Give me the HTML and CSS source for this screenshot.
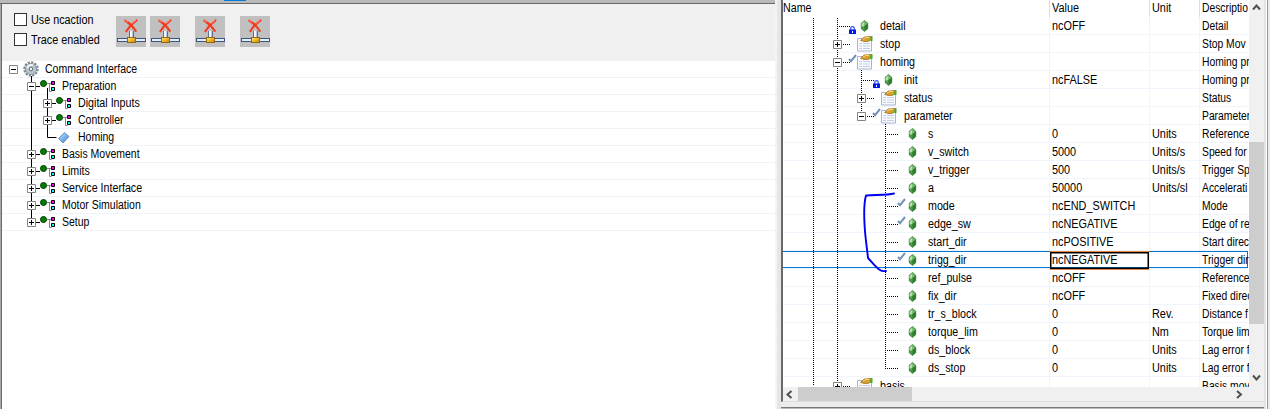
FILE: index.html
```html
<!DOCTYPE html>
<html lang="en">
<head>
<meta charset="utf-8">
<title>Command Interface</title>
<link rel="stylesheet" href="styles.css">
</head>
<body>
<svg class="defs" width="0" height="0">
  <defs>
    <linearGradient id="gold" x1="0" y1="0" x2="1" y2="1"><stop offset="0" stop-color="#fff0a0"/><stop offset=".5" stop-color="#f0b820"/><stop offset="1" stop-color="#c07c10"/></linearGradient>
    <linearGradient id="blue" x1="0" y1="0" x2="1" y2="1"><stop offset="0" stop-color="#c4e2ff"/><stop offset="1" stop-color="#3d84d4"/></linearGradient>
    <symbol id="disconnect" viewBox="0 0 30 31">
      <rect x="13" y="15" width="5" height="7" fill="#5a7094"/><rect x="14" y="15" width="2" height="7" fill="#f4f8ff"/><rect x="16" y="15" width="1" height="7" fill="#b4c4dc"/>
      <rect x="1" y="22" width="29" height="4" fill="#3c5480"/><rect x="2" y="23" width="27" height="2" fill="#e4eefa"/>
      <rect x="11.5" y="21.5" width="8" height="5" fill="url(#gold)" stroke="#946814"/>
      <path d="M9.2 4.5Q15 8 19.8 14.8M20.5 4.3Q14 9 10.3 15.2" fill="none" stroke="#f33a1e" stroke-width="2.1" stroke-linecap="round"/>
      <path d="M9 4l3 2M20 4l-4 3.5" stroke="#ff9a80" fill="none"/>
    </symbol>
    <symbol id="plus" viewBox="0 0 9 9"><path d="M.5.5h8v8h-8z" fill="#fff" stroke="#848484"/><path d="M2 4.5h5M4.5 2v5" stroke="#000"/></symbol>
    <symbol id="minus" viewBox="0 0 9 9"><path d="M.5.5h8v8h-8z" fill="#fff" stroke="#848484"/><path d="M2 4.5h5" stroke="#000"/></symbol>
    <symbol id="node" viewBox="0 0 20 17">
      <path d="M0 8.5h4" stroke="#000"/>
      <path d="M11 5.5h4M13.5 5v8.5h2" fill="none" stroke="#848484"/>
      <circle cx="7.5" cy="5.5" r="3" fill="#008000" stroke="#053c05"/>
      <path d="M15.5 3.5h3v3h-3z" fill="#f0f" stroke="#000"/><path d="M15.5 9.5h3v3h-3z" fill="#0ff" stroke="#000"/>
    </symbol>
    <symbol id="gear" viewBox="0 0 16 16">
      <circle cx="8" cy="8" r="6.6" fill="none" stroke="#7b8791" stroke-width="2.2" stroke-dasharray="2.2 1.25"/>
      <circle cx="8" cy="8" r="5.5" fill="#bcc6ce" stroke="#87939d"/>
      <path d="M4.2 7.4A4 4 0 0 1 10 4.3" fill="none" stroke="#f4f8fa" stroke-width="1.8"/>
      <circle cx="8" cy="8" r="1.8" fill="#eef2f4" stroke="#616d77"/>
    </symbol>
    <symbol id="gem" viewBox="0 0 8 12">
      <path d="M4 .5L7.5 3.5v5L4 11.5.5 8.5v-5z" fill="#4aa046" stroke="#2f702f" stroke-width=".7"/>
      <path d="M4 1L1 3.8v3L4 6z" fill="#b4e0ae"/><path d="M4 1l3 2.8L4 6z" fill="#74b870"/><path d="M4 6l3.2-2.2v4.4L4 11z" fill="#2f7a30"/>
    </symbol>
    <symbol id="sheet" viewBox="0 0 16 16">
      <path d="M.5 2.5h14v12.5H.5z" fill="#f8faff" stroke="#a9b5cc"/>
      <path d="M2 7.5h3M6 7.5h7M2 10h3M6 10h7M2 12.5h3M6 12.5h7" stroke="#c3cee2"/>
      <path d="M3.5 4.5L7 1l7-.5V4l-3 1.5H7L5.5 5z" fill="#d69e2c" stroke="#9c6c18" stroke-width=".7"/>
      <path d="M6 3l3-1.5h3" stroke="#f7d77d" fill="none"/><path d="M14 0h1.5v5H13z" fill="#3cb42c"/>
    </symbol>
    <symbol id="lock" viewBox="0 0 7 8"><path d="M1.8 4V2q0-1.3 1.7-1.3T5.2 2v2" fill="none" stroke="#2c4cf0" stroke-width="1.2"/><path d="M0 3.5h7V8H0z" fill="#0018e8"/><path d="M3 5h1v2H3z" fill="#fff"/></symbol>
    <symbol id="check" viewBox="0 0 9 9"><path d="M1 5l2 2.2L8 1" fill="none" stroke="#7491b8" stroke-width="2"/></symbol>
    <symbol id="open-group" viewBox="0 0 48 18"><use href="#minus" x="1" y="5" width="9" height="9"/><path d="M11 9.5h8" class="dots"/><use href="#sheet" x="25" y="1" width="16" height="16"/></symbol>
    <symbol id="closed-group" viewBox="0 0 48 18"><use href="#plus" x="1" y="5" width="9" height="9"/><path d="M11 9.5h8" class="dots"/><use href="#sheet" x="25" y="1" width="16" height="16"/></symbol>
    <symbol id="leaf" viewBox="0 0 48 18"><path d="M5 9.5h13" class="dots"/><use href="#gem" x="28.5" y="3" width="8" height="12"/></symbol>
  </defs>
</svg>
<div class="app">
  <section class="commands">
    <div class="topstrip"><i></i></div>
    <div class="toolbar">
      <div class="checks">
        <label><b class="box"></b><span class="t wide">Use ncaction</span></label>
        <label><b class="box"></b><span class="t wide">Trace enabled</span></label>
      </div>
      <div class="buttons">
        <svg><use href="#disconnect"/></svg><svg><use href="#disconnect"/></svg><svg class="apart"><use href="#disconnect"/></svg><svg class="apart"><use href="#disconnect"/></svg>
      </div>
    </div>
    <div class="ctree">
      <svg class="lines" width="80" height="170"><path d="M31.5 15v146M47.5 27v49.5h9" fill="none" stroke="#000"/></svg>
      <div class="crow d0"><svg width="36" height="17"><use href="#minus" x="0" y="4" width="9" height="9"/><use href="#gear" x="14" y="0" width="16" height="16"/></svg><span class="t tight">Command Interface</span></div>
      <div class="crow d1"><svg width="35" height="17"><use href="#minus" x="0" y="4" width="9" height="9"/><use href="#node" x="9" width="20" height="17"/></svg><span class="t tight">Preparation</span></div>
      <div class="crow d2"><svg width="35" height="17"><use href="#plus" x="0" y="4" width="9" height="9"/><use href="#node" x="9" width="20" height="17"/></svg><span class="t">Digital Inputs</span></div>
      <div class="crow d2"><svg width="35" height="17"><use href="#plus" x="0" y="4" width="9" height="9"/><use href="#node" x="9" width="20" height="17"/></svg><span class="t tight">Controller</span></div>
      <div class="crow d2"><svg width="35" height="17"><path d="M15.5 9.5l6-6 4.5 4-6 6.5z" fill="url(#blue)" stroke="#4a80bd" stroke-width=".8"/></svg><span class="t tight">Homing</span></div>
      <div class="crow d1"><svg width="35" height="17"><use href="#plus" x="0" y="4" width="9" height="9"/><use href="#node" x="9" width="20" height="17"/></svg><span class="t tight">Basis Movement</span></div>
      <div class="crow d1"><svg width="35" height="17"><use href="#plus" x="0" y="4" width="9" height="9"/><use href="#node" x="9" width="20" height="17"/></svg><span class="t">Limits</span></div>
      <div class="crow d1"><svg width="35" height="17"><use href="#plus" x="0" y="4" width="9" height="9"/><use href="#node" x="9" width="20" height="17"/></svg><span class="t">Service Interface</span></div>
      <div class="crow d1"><svg width="35" height="17"><use href="#plus" x="0" y="4" width="9" height="9"/><use href="#node" x="9" width="20" height="17"/></svg><span class="t tight">Motor Simulation</span></div>
      <div class="crow d1"><svg width="35" height="17"><use href="#plus" x="0" y="4" width="9" height="9"/><use href="#node" x="9" width="20" height="17"/></svg><span class="t tight">Setup</span></div>
    </div>
  </section>
  <div class="splitter"></div>
  <section class="params">
    <div class="view">
      <div class="table">
        <div class="prow head"><div><span class="t">Name</span></div><div><span class="t">Value</span></div><div><span class="t">Unit</span></div><div><span class="t">Descriptio</span></div></div>
        <svg class="lines" width="120" height="387"><path d="M30.5 18v368M54.5 18v368M78.5 70v46M102.5 124v244" class="dots"/></svg>
        <div class="prow p1"><div><svg><use href="#leaf"/><use href="#lock" x="17" y="9" width="7" height="8"/></svg><span class="t">detail</span></div><div><span class="t">ncOFF</span></div><div></div><div><span class="t">Detail</span></div></div>
        <div class="prow p1"><div><svg><use href="#closed-group"/></svg><span class="t">stop</span></div><div></div><div></div><div><span class="t">Stop Mov</span></div></div>
        <div class="prow p1"><div><svg><use href="#open-group"/><use href="#check" x="16" y="1" width="9" height="9"/></svg><span class="t">homing</span></div><div></div><div></div><div><span class="t">Homing pr</span></div></div>
        <div class="prow p2"><div><svg><use href="#leaf"/><use href="#lock" x="17" y="9" width="7" height="8"/></svg><span class="t">init</span></div><div><span class="t">ncFALSE</span></div><div></div><div><span class="t">Homing pr</span></div></div>
        <div class="prow p2"><div><svg><use href="#closed-group"/></svg><span class="t">status</span></div><div></div><div></div><div><span class="t">Status</span></div></div>
        <div class="prow p2"><div><svg><use href="#open-group"/><use href="#check" x="16" y="1" width="9" height="9"/></svg><span class="t">parameter</span></div><div></div><div></div><div><span class="t">Parameter</span></div></div>
        <div class="prow p3"><div><svg><use href="#leaf"/></svg><span class="t">s</span></div><div><span class="t">0</span></div><div><span class="t">Units</span></div><div><span class="t">Reference</span></div></div>
        <div class="prow p3"><div><svg><use href="#leaf"/></svg><span class="t">v_switch</span></div><div><span class="t">5000</span></div><div><span class="t">Units/s</span></div><div><span class="t">Speed for</span></div></div>
        <div class="prow p3"><div><svg><use href="#leaf"/></svg><span class="t">v_trigger</span></div><div><span class="t">500</span></div><div><span class="t">Units/s</span></div><div><span class="t">Trigger Sp</span></div></div>
        <div class="prow p3"><div><svg><use href="#leaf"/></svg><span class="t">a</span></div><div><span class="t">50000</span></div><div><span class="t">Units/sl</span></div><div><span class="t">Accelerati</span></div></div>
        <div class="prow p3"><div><svg><use href="#leaf"/><use href="#check" x="17" y="1" width="9" height="9"/></svg><span class="t">mode</span></div><div><span class="t">ncEND_SWITCH</span></div><div></div><div><span class="t">Mode</span></div></div>
        <div class="prow p3"><div><svg><use href="#leaf"/><use href="#check" x="17" y="1" width="9" height="9"/></svg><span class="t">edge_sw</span></div><div><span class="t">ncNEGATIVE</span></div><div></div><div><span class="t">Edge of re</span></div></div>
        <div class="prow p3"><div><svg><use href="#leaf"/></svg><span class="t">start_dir</span></div><div><span class="t">ncPOSITIVE</span></div><div></div><div><span class="t">Start direc</span></div></div>
        <div class="prow p3 selected"><div><svg><use href="#leaf"/><use href="#check" x="17" y="1" width="9" height="9"/></svg><span class="t">trigg_dir</span></div><div class="focus"><span class="t">ncNEGATIVE</span></div><div></div><div><span class="t">Trigger dir</span></div></div>
        <div class="prow p3"><div><svg><use href="#leaf"/></svg><span class="t">ref_pulse</span></div><div><span class="t">ncOFF</span></div><div></div><div><span class="t">Reference</span></div></div>
        <div class="prow p3"><div><svg><use href="#leaf"/></svg><span class="t">fix_dir</span></div><div><span class="t">ncOFF</span></div><div></div><div><span class="t">Fixed direc</span></div></div>
        <div class="prow p3"><div><svg><use href="#leaf"/></svg><span class="t">tr_s_block</span></div><div><span class="t">0</span></div><div><span class="t">Rev.</span></div><div><span class="t">Distance f</span></div></div>
        <div class="prow p3"><div><svg><use href="#leaf"/></svg><span class="t">torque_lim</span></div><div><span class="t">0</span></div><div><span class="t">Nm</span></div><div><span class="t">Torque lim</span></div></div>
        <div class="prow p3"><div><svg><use href="#leaf"/></svg><span class="t">ds_block</span></div><div><span class="t">0</span></div><div><span class="t">Units</span></div><div><span class="t">Lag error f</span></div></div>
        <div class="prow p3"><div><svg><use href="#leaf"/></svg><span class="t">ds_stop</span></div><div><span class="t">0</span></div><div><span class="t">Units</span></div><div><span class="t">Lag error f</span></div></div>
        <div class="prow p1"><div><svg><use href="#closed-group"/></svg><span class="t">basis</span></div><div></div><div></div><div><span class="t">Basis mov</span></div></div>
        <svg class="marker" width="36" height="84"><path d="M32 3.5C25 5.5 11 4.5 4 5.5C1.5 14 2 24 2.5 34C3 46 5 58 6 68C10 72 13 77 18 80Q20 81.5 24 81" fill="none" stroke="#0000f0" stroke-width="1.9" stroke-linecap="round"/></svg>
      </div>
      <div class="vscroll"><svg width="15" height="14"><path d="M4 9.5L7.5 5.5 11 9.5" class="arrow"/></svg><i></i><svg width="15" height="16"><path d="M4 5.5L7.5 9.5 11 5.5" class="arrow"/></svg></div>
    </div>
    <div class="hscroll"><svg width="15" height="14"><path d="M8.5 4L4.5 7.5 8.5 11" class="arrow"/></svg><i></i><svg width="30" height="14"><path d="M5 4L9 7.5 5 11" class="arrow"/></svg></div>
    <div class="under"></div>
  </section>
  <div class="edge"></div>
</div>
</body>
</html>
```
FILE: styles.css
```css
* { box-sizing: border-box; }
body { margin: 0; background: #ececec; font: 12px/16px "Liberation Sans", Arial, sans-serif; color: #000; overflow: hidden; }
.defs { position: absolute; }
.app { display: flex; width: 1270px; height: 409px; overflow: hidden; }
.t { display: inline-block; white-space: nowrap; transform: scaleX(.89); transform-origin: 0 50%; }
.t.wide { transform: scaleX(.9); }
.t.tight { transform: scaleX(.875); }
.dots { fill: none; stroke: #000; stroke-width: 1; stroke-dasharray: 1 1; }
.arrow { fill: none; stroke: #505050; stroke-width: 2; }

.commands { width: 775px; display: flex; flex-direction: column; background: #fff; border-left: 1px solid #a8a8a8; }
.topstrip { height: 4px; margin-left: -1px; background: #b9b9b9; border-bottom: 1px solid #696969; flex: none; }
.topstrip i { display: block; width: 22px; height: 1px; margin-left: 224px; background: #0078d7; }
.toolbar { height: 57px; flex: none; display: flex; background: #f0f0f0; border-left: 1px solid #696969; padding: 9px 0 0 12px; }
.checks { width: 102px; display: flex; flex-direction: column; gap: 4px; }
.checks label { display: flex; height: 16px; gap: 4px; }
.checks .t { margin-top: -1px; }
.box { width: 13px; height: 13px; border: 1px solid #333; background: #fff; flex: none; }
.buttons { display: flex; gap: 4px; padding-top: 3px; }
.buttons svg { width: 30px; height: 31px; background: #c0c0c0; }
.buttons .apart { margin-left: 11px; }

.ctree { flex: 1; position: relative; border-left: 1px solid #696969; }
.lines { position: absolute; left: 0; top: 0; z-index: 1; }
.ctree .lines { left: -2px; }
.crow { display: flex; height: 17px; border-bottom: 1px solid #f0f4fa; }
.crow svg { flex: none; position: relative; z-index: 2; }
.d0 { padding-left: 7px; }
.d1 { padding-left: 25px; }
.d2 { padding-left: 41px; }

.splitter { width: 6px; background: #e6e6e6; border-left: 2px solid #f4f4f4; }
.params { width: 483px; display: flex; flex-direction: column; }
.view { height: 387px; display: flex; border-left: 2px solid #696969; flex: none; }
.table { width: 466px; height: 387px; background: #fff; overflow: hidden; position: relative; }
.prow { display: grid; grid-template-columns: 266px 100px 50px 49px; height: 18px; border-bottom: 1px solid #f0f4fc; width: 465px; position: relative; }
.prow > div { display: flex; padding: 1px 0 0 3px; border-left: 1px solid #f0f4fc; min-width: 0; }
.prow > div:first-child { border: 0; padding-left: 0; }
.prow > div:nth-child(2) { padding-left: 2px; }
.prow > div:nth-child(2) .t { transform: scaleX(.905); }
.prow > div:nth-child(3) { padding-left: 2px; }
.prow > div:nth-child(3) .t { transform: scaleX(.905); }
.prow > div:last-child { padding-left: 2px; }
.prow > div:last-child .t { transform: scaleX(.86); }
.prow svg { width: 48px; height: 18px; margin-top: -1px; flex: none; position: relative; z-index: 2; }
.prow.head { height: 17px; border-bottom: 0; }
.prow.head > div { padding-top: 0; border-color: #dedede; }
.prow.p1 > div:first-child { padding-left: 49px; }
.prow.p2 > div:first-child { padding-left: 73px; }
.prow.p3 > div:first-child { padding-left: 97px; }
.selected::before { content: ""; position: absolute; inset: 0; border: 1px solid #0078d7; border-left: 0; }
.selected .focus::before { content: ""; position: absolute; left: 267px; top: 0; width: 99px; height: 17px; border: 1px solid #e88338; border-left: 0; border-right: 0; box-shadow: inset 0 0 0 1.5px #000; }
.marker { position: absolute; left: 79px; top: 190px; z-index: 3; }
.vscroll { width: 15px; background: #f0f0f0; display: flex; flex-direction: column; }
.vscroll i { height: 182px; background: #cdcdcd; margin-top: 128px; margin-bottom: 46px; }
.hscroll { height: 15px; border-left: 2px solid #696969; border-bottom: 1px solid #dcdcdc; background: #f0f0f0; display: flex; flex: none; }
.hscroll i { width: 114px; background: #cdcdcd; }
.hscroll svg:last-child { margin-left: auto; margin-right: 2px; }
.under { margin-top: 5px; border-top: 1px solid #777; background: #bcbcbc; flex: 1; }
.edge { width: 6px; border-left: 2px solid #e4e4e4; background: linear-gradient(to right, #fff 1px, #999 1px, #999 2px, #ececec 2px); }
```
